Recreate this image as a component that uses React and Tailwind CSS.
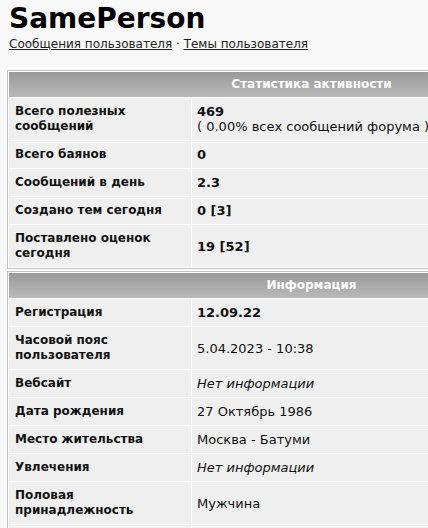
const stats = [
  { label: 'Всего полезных сообщений', value: <><b>469</b><br />( 0.00% всех сообщений форума )</> },
  { label: 'Всего баянов', value: <b>0</b> },
  { label: 'Сообщений в день', value: <b>2.3</b> },
  { label: 'Создано тем сегодня', value: <b>0 [3]</b> },
  { label: 'Поставлено оценок сегодня', value: <b>19 [52]</b> },
];

const info = [
  { label: 'Регистрация', value: <b>12.09.22</b> },
  { label: 'Часовой пояс пользователя', value: '5.04.2023 - 10:38' },
  { label: 'Вебсайт', value: <i>Нет информации</i> },
  { label: 'Дата рождения', value: '27 Октябрь 1986' },
  { label: 'Место жительства', value: 'Москва - Батуми' },
  { label: 'Увлечения', value: <i>Нет информации</i> },
  { label: 'Половая принадлежность', value: 'Мужчина' },
  { label: '', value: '' },
];

function Block({ title, rows }) {
  return (
    <div className="w-[609px] border border-[#c4c4c4] bg-white p-px">
      <div className="grid grid-cols-[182px_1fr] gap-px">
        <div className="col-span-2 h-[25px] bg-gradient-to-b from-[#9a9a9a] to-[#b9b9b9] text-center text-[12px] font-bold leading-[25px] text-white">
          {title}
        </div>
        {rows.map((r, i) => (
          <div key={i} className="contents">
            <div className="min-h-[27px] bg-[#efefef] px-[6px] py-[6px] text-[12px] font-bold leading-[15px]">{r.label}</div>
            <div className="flex items-center bg-[#efefef] px-[5px] py-[6px]">
              <div>{r.value}</div>
            </div>
          </div>
        ))}
      </div>
    </div>
  );
}

export default function App() {
  return (
    <div
      className="h-[528px] w-full overflow-hidden bg-[#f8f8f8] text-[13px] leading-[15px] text-[#111]"
      style={{ fontFamily: '"DejaVu Sans", Verdana, sans-serif' }}
    >
      <div className="pl-[9px] pt-[3px]">
        <h1 className="text-[28px] font-bold leading-[32px] text-black">SamePerson</h1>
        <div className="mt-[2px] text-[12px] leading-[15px] text-[#222]">
          <a href="#" className="underline">Сообщения пользователя</a>
          <span> · </span>
          <a href="#" className="underline">Темы пользователя</a>
        </div>
      </div>
      <div className="ml-[7px] mt-[18px] flex flex-col gap-[2px]">
        <Block title="Статистика активности" rows={stats} />
        <Block title="Информация" rows={info} />
      </div>
    </div>
  );
}
